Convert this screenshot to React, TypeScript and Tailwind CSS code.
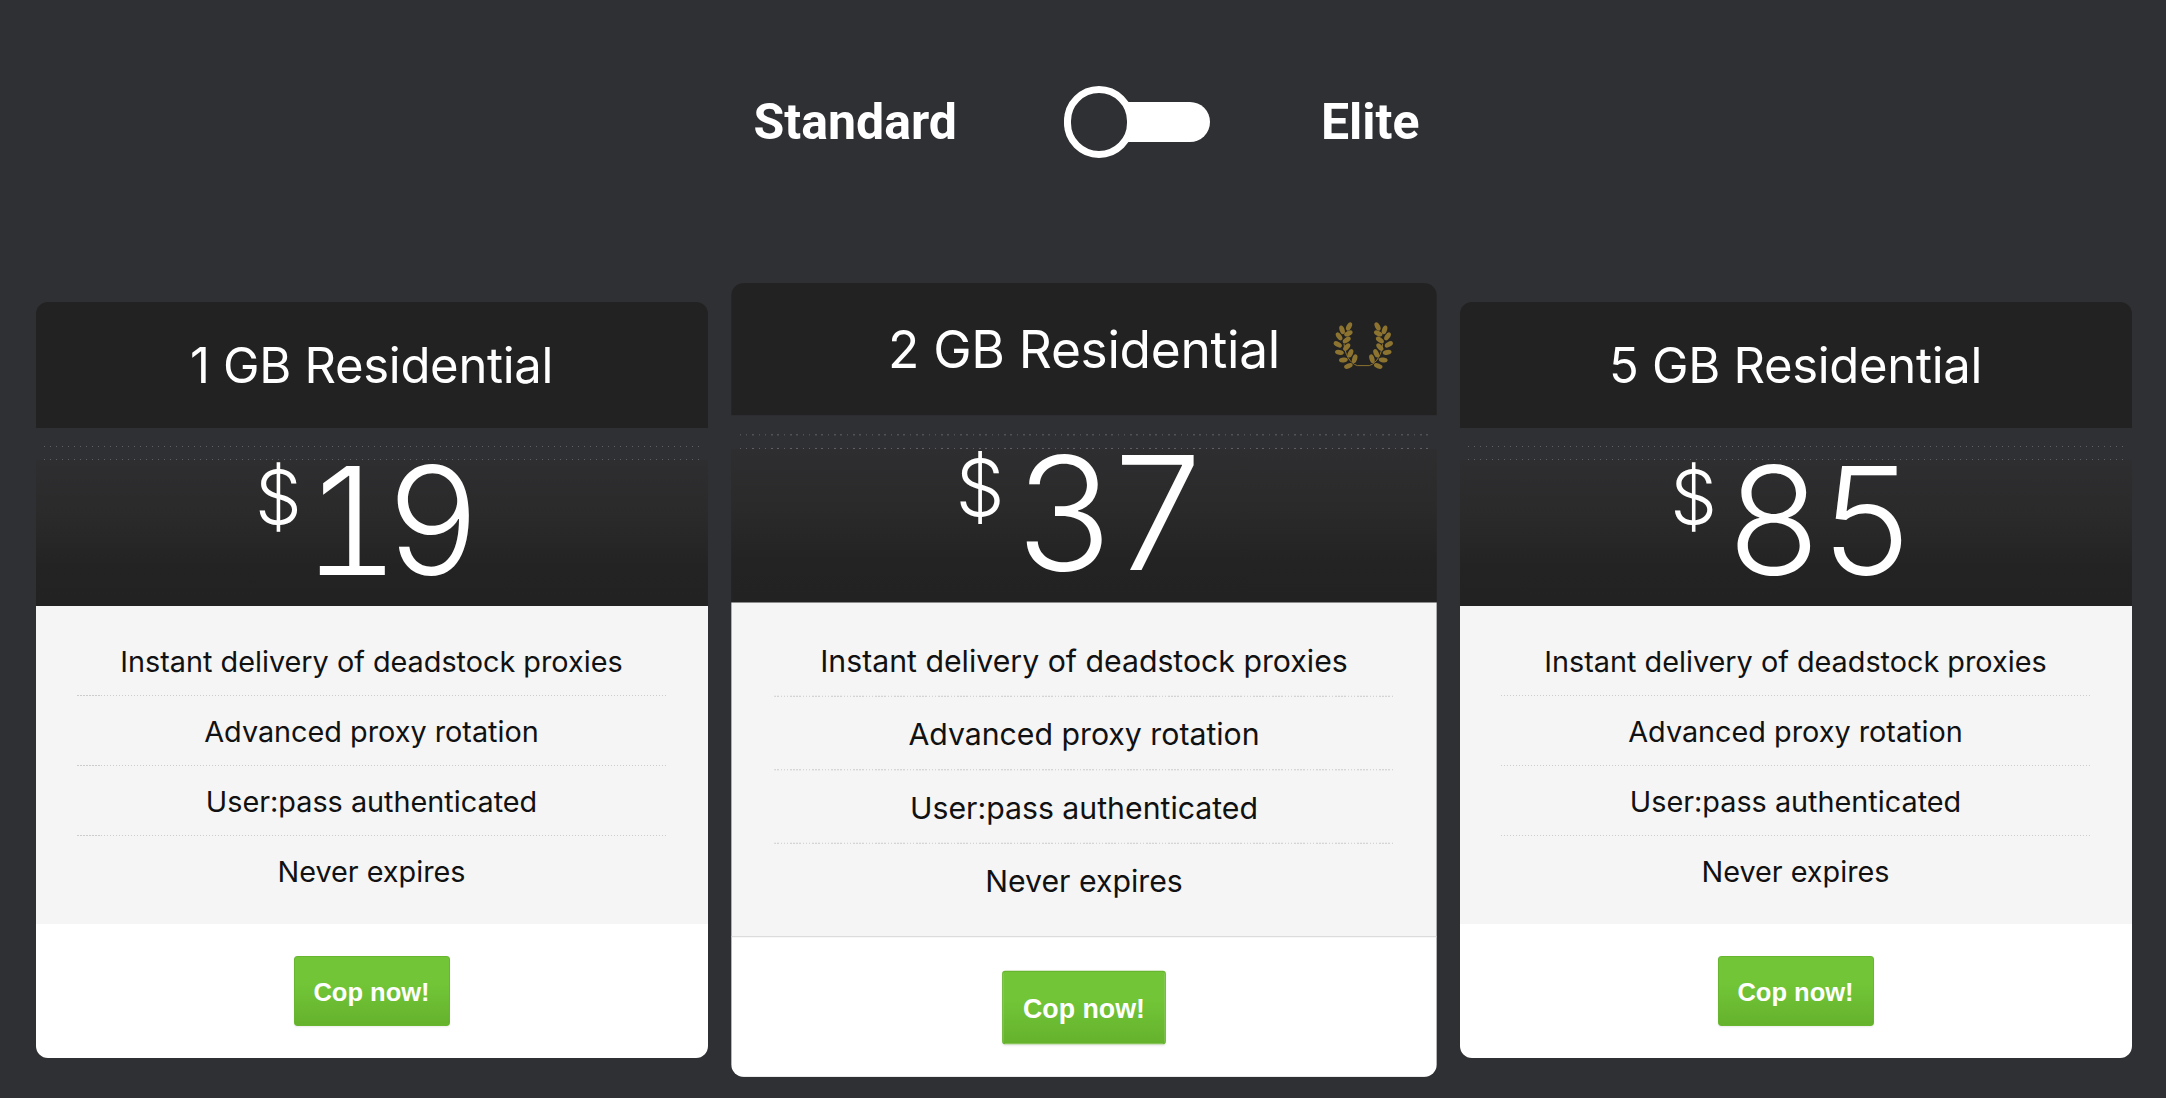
const features = [
  "Instant delivery of deadstock proxies",
  "Advanced proxy rotation",
  "User:pass authenticated",
  "Never expires",
];

const leaves: [number, number, number][] = [
  [207, 79, -62],
  [186, 89, 70],
  [205, 100, -25],
  [177, 109, 55],
  [200, 120, -35],
  [173, 133, 30],
  [200, 141, -48],
  [178, 157, 12],
  [211, 160, -65],
  [190, 180, -8],
  [224, 176, -72],
  [205, 198, -22],
];

function Laurel() {
  const leaf = (l: [number, number, number], i: number) => (
    <ellipse key={i} cx={l[0]} cy={l[1]} rx="13.5" ry="7.5" transform={`rotate(${l[2]} ${l[0]} ${l[1]})`} />
  );
  return (
    <svg viewBox="155 60 190 150" className="absolute left-[572px] top-[35px] h-[48px] w-[60px]" fill="#8d7330">
      <g>{leaves.map(leaf)}</g>
      <g transform="matrix(-1 0 0 1 500 0)">{leaves.map(leaf)}</g>
      <path d="M192 132C194 160 208 190 232 197H268C292 190 306 160 308 132" fill="none" stroke="#8d7330" strokeWidth="3" />
    </svg>
  );
}

function Card({ gb, price, digits, featured }: { gb: number; price: number; digits: string; featured?: boolean }) {
  return (
    <div
      className={`relative flex h-[756px] w-[672px] flex-col overflow-hidden rounded-[12px] ${
        featured ? "z-10 scale-[1.05]" : ""
      }`}
    >
      <div className="flex h-[126px] items-center justify-center bg-[#222222] pt-[2px] text-[49px] font-[370] tracking-[-0.3px] text-white">
        {gb} GB Residential
      </div>
      {featured && <Laurel />}
      <div className="relative flex h-[178px] justify-center bg-[linear-gradient(#2f3034_18%,#2e2e30_18%,#2a2a2b_50%,#232323_78%,#222222)] text-white">
        <div className="absolute left-[8px] right-[8px] top-[18px] h-px bg-[repeating-linear-gradient(90deg,#5f6064_0,#5f6064_1.5px,transparent_1.5px,transparent_6px)]" />
        <div className="absolute left-[8px] right-[8px] top-[31px] h-px bg-[repeating-linear-gradient(90deg,#5f6064_0,#5f6064_1.5px,transparent_1.5px,transparent_6px)]" />
        <span className="mt-[25px] text-[74px] leading-[88px] font-light">$</span>
        <span className={`mt-[3px] text-[150px] leading-[180px] font-[340] ${digits}`}>{price}</span>
      </div>
      <div className="flex h-[318px] flex-col bg-[#f5f5f5] px-[41px] pt-[20px] text-[#111111]">
        {features.map((f, i) => (
          <div key={f}>
            <div className="flex h-[69px] items-center justify-center pt-[2px] text-center text-[28.8px]">{f}</div>
            {i < 3 && (
              <div className="h-px bg-[repeating-linear-gradient(90deg,#cccccc_0,#cccccc_1.5px,transparent_1.5px,transparent_3px)]" />
            )}
          </div>
        ))}
      </div>
      <div className={`flex flex-1 items-start justify-center bg-white pt-[32px] ${featured ? "border-t border-[#dddddd]" : ""}`}>
        <button className="h-[70px] w-[156px] rounded-[3px] border border-[#68b52f] bg-[linear-gradient(#72c537_40%,#65b22d)] pt-[3px] font-['Liberation_Sans'] text-[25.5px] font-bold text-white shadow-[0_1px_2px_rgba(0,0,0,0.08)]">
          Cop now!
        </button>
      </div>
    </div>
  );
}

export default function App() {
  return (
    <div className="h-[1098px] overflow-hidden bg-[#2f3034] pl-[1px] font-['Inter',sans-serif]">
      <div className="flex justify-center pl-[6px] pt-[86px]">
        <div className="flex h-[72px] items-center font-['Roboto',sans-serif] text-[50px] font-bold text-white">
          <span className="mr-[-1px]">Standard</span>
          <div className="relative ml-[108px] mr-[111px] h-[40px] w-[146px] rounded-full bg-white">
            <div className="absolute left-0 top-[-16px] h-[72px] w-[70px] rounded-full border-[7px] border-white bg-[#2f3034]" />
          </div>
          <span>Elite</span>
        </div>
      </div>
      <div className="mt-[144px] flex justify-center gap-[40px]">
        <Card gb={1} price={19} digits="ml-[1px] mr-[21px] tabular-nums tracking-[-15px]" />
        <Card gb={2} price={37} digits="ml-[11px] mr-[8px] tracking-[2px]" featured />
        <Card gb={5} price={85} digits="ml-[11px] mr-[8px] tracking-[2px]" />
      </div>
    </div>
  );
}
